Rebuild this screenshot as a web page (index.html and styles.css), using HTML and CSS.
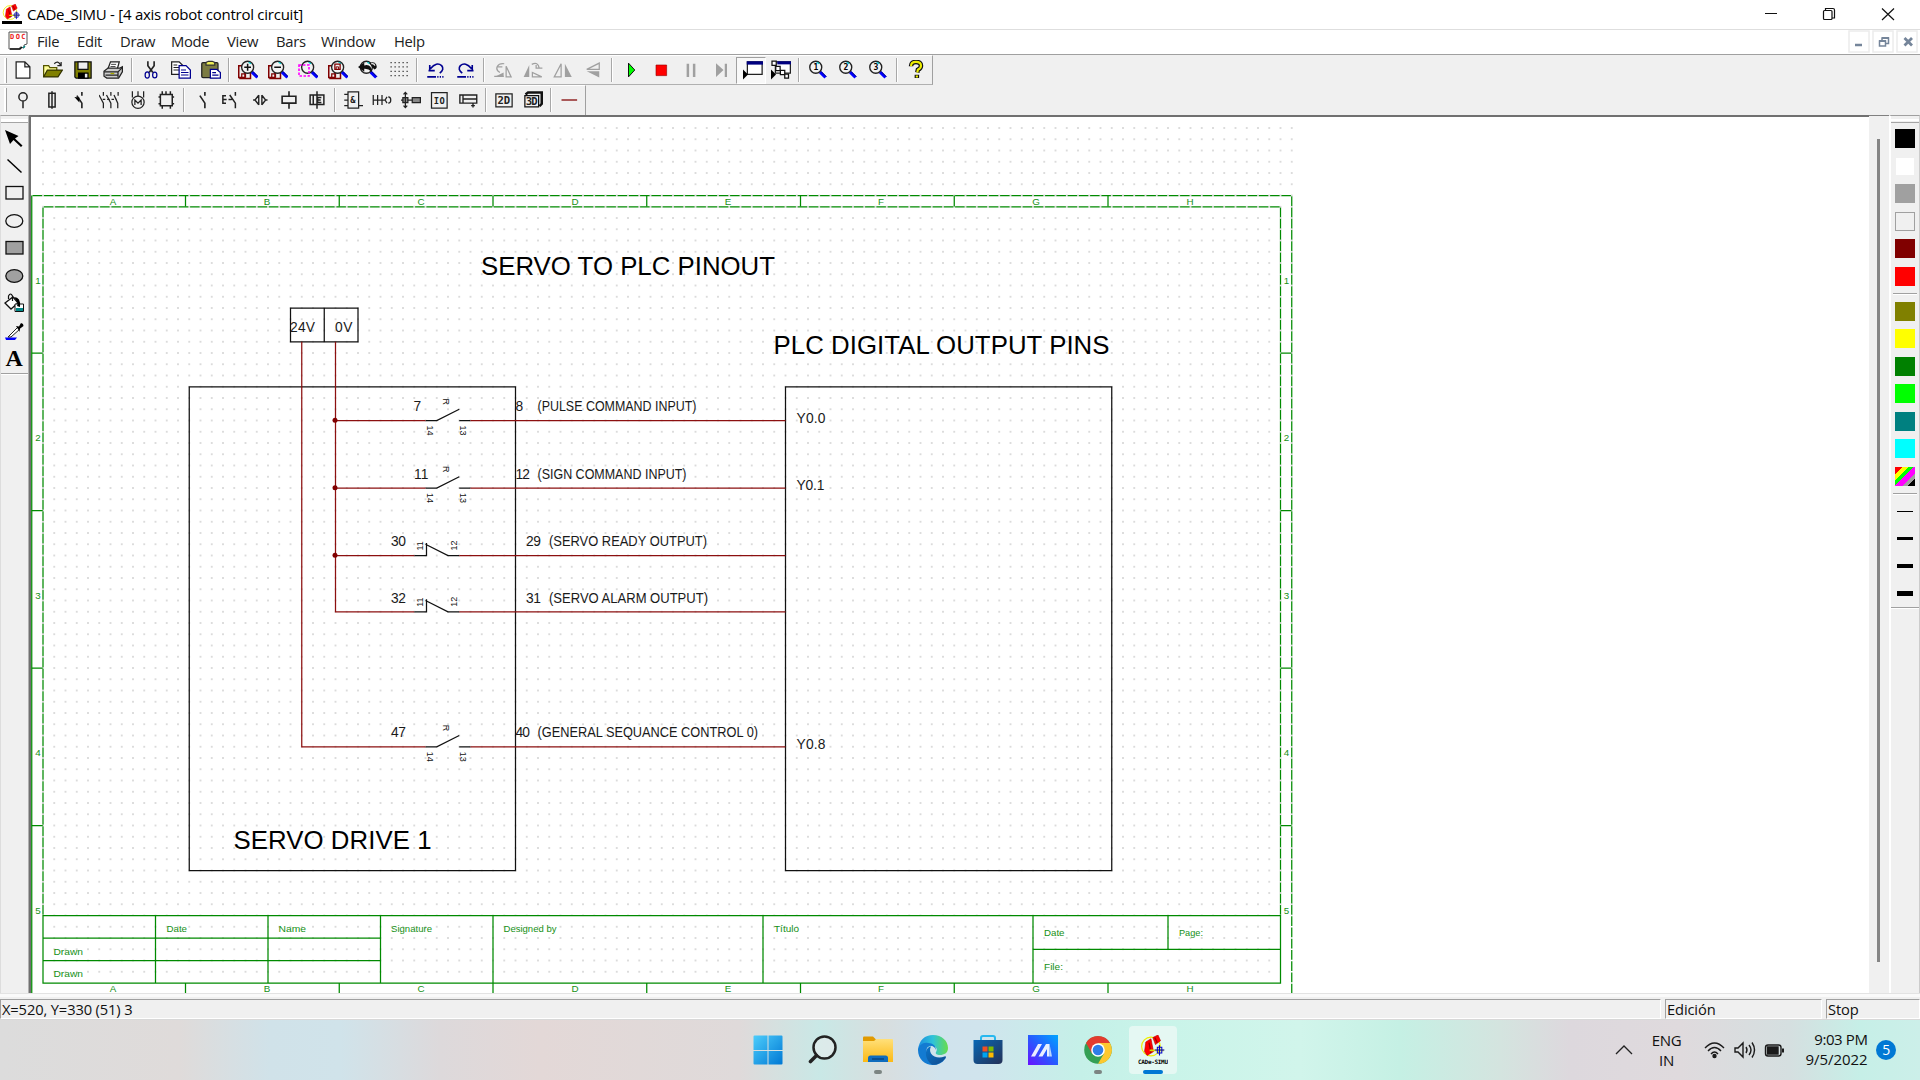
FILE: index.html
```html
<!DOCTYPE html>
<html lang="en">
<head>
<meta charset="utf-8">
<title>CADe_SIMU</title>
<link rel="stylesheet" href="styles.css">
</head>
<body>
<svg class="defs" width="0" height="0">
  <defs>
    <symbol id="lens" viewBox="0 0 16 16"><path d="M9.5 9.5l4.5 4.5" stroke="#00f" stroke-width="2.4"/><path d="M10.5 9.2l4.2 4.2" stroke="#000080" stroke-width=".8"/><circle cx="6.2" cy="5.8" r="4.8" fill="#f2f2f2" stroke="#222" stroke-width="1.1"/><path d="M7 1.8l2 1.2" stroke="#0cc"/></symbol>
    <symbol id="disk" viewBox="0 0 16 16"><path d="M.6 4.5h5v9.5h-5zM5 10h5v4.8H1" fill="#eee" stroke="#800000" stroke-width="1.2"/><path d="M3 14v-3h3v3" fill="none" stroke="#800000"/></symbol>
    <symbol id="robot" viewBox="0 0 20 18"><circle cx="8" cy="9" r="7.3" fill="none" stroke="#ee0" stroke-width=".9"/><path d="M9.500 2l4-2 2 4.500-4 3zM4 5.500l4-2.500 2 10-5 3-2-3z" fill="red" stroke="#b00" stroke-width=".5"/><path d="M6.500 6l1.500 8M11 2l2 4" stroke="#900" fill="none"/><path d="M7 12h11M14.500 8v7" stroke="#dd0" stroke-width="1.300"/><path d="M13 9.500h3.500V14H13zM11 11.700h7.500M14.700 8v8" stroke="#00c" fill="none" stroke-width=".8"/></symbol>
    <symbol id="no-contact" viewBox="0 0 16 16"><path d="M5.500 4.500l4 6v4M9.500 1.500v3" fill="none" stroke="#222" stroke-width="1.300"/></symbol>
    <symbol id="flip" viewBox="0 0 16 16"><path d="M6.500 3v10.500H1z" fill="none" stroke="#a0a0a0"/><path d="M9.500 3v10.500H15z" fill="#a0a0a0"/></symbol>
  </defs>
</svg>
<div class="desktop">
  <header class="titlebar">
    <svg class="app-icon" viewBox="0 0 20 20"><use href="#robot" width="20" height="17"/><path d="M0 17h20v3H0z"/></svg>
    <span class="app-title">CADe_SIMU - [4 axis robot control circuit]</span>
    <svg class="win-controls" viewBox="0 0 180 29" fill="none" stroke="#111" stroke-width="1.2"><path d="M25 13.500h12M142 8.500l12 11.500M154 8.500l-12 11.500"/><rect x="83.500" y="10.500" width="8.500" height="9" rx="1"/><path d="M85.500 10V8.500h7.500q1.500 0 1.500 1.500v8H92"/></svg>
  </header>
  <nav class="menubar">
    <svg class="doc-icon" viewBox="0 0 20 20"><path d="M1 1h18v12l-3 1v3l-4-1v2H1z" fill="#fff" stroke="#555"/><path d="M2 18h10l2-2" stroke="#111" stroke-width="1.500" fill="none"/><path d="M15 17l2-2" stroke="#088" stroke-width="1.500"/><text x="2" y="7.500" font-family="DejaVu Sans Mono" font-weight="bold" font-size="7" textLength="15.500" fill="#e22">DOC</text></svg>
    <span class="m-file">File</span><span class="m-edit">Edit</span><span class="m-draw">Draw</span><span class="m-mode">Mode</span><span class="m-view">View</span><span class="m-bars">Bars</span><span class="m-window">Window</span><span class="m-help">Help</span>
    <svg class="mdi-controls" viewBox="0 0 72 25"><g fill="#fff" stroke="#ececec" stroke-width="1.500"><rect x="1" y="1" width="20" height="21"/><rect x="25" y="1" width="20" height="21"/><rect x="49" y="1" width="20" height="21"/></g><g stroke="#75859a" fill="none"><path d="M7 15h7" stroke-width="2.500"/><path d="M31.500 11h6v5h-6zM34 10V8h6.500v5.500H38" stroke-width="1.500"/><path d="M31 11h7M34 8h7" stroke-width="2.200"/><path d="M56.500 8l7.500 7.500M64 8l-7.500 7.500" stroke-width="2.800"/></g></svg>
  </nav>

  <div class="toolbar toolbar-main">
    <svg class="btn" viewBox="0 0 16 16"><path d="M2.500 1.500h7l4 4v9h-11zM9.500 1.500v4h4" fill="#fff" stroke="#222"/></svg>
    <svg class="btn" viewBox="0 0 16 16"><path d="M.5 13.500v-9h4l1 1.500h5.500v2" fill="#ff9" stroke="#550"/><path d="M.5 13.500l3-5.500h12l-3.500 5.500z" fill="#808000" stroke="#330"/><path d="M9 3q3-3 5 1M14.500 1.500v3h-3" fill="none" stroke="#222"/></svg>
    <svg class="btn" viewBox="0 0 16 16"><path d="M1.500 1.500h13v13h-12l-1-1z" fill="#808000" stroke="#111"/><path d="M4 1.500h8v6H4z" fill="#eee" stroke="#111"/><path d="M4 10h8.500v5H4z"/><path d="M9.500 11h2v3h-2z" fill="#eee"/></svg>
    <svg class="btn" viewBox="0 0 16 16"><path d="M4 7l2-5.500h7L11.500 7" fill="#fff" stroke="#222"/><path d="M6.500 3.500h4M6 5.200h4" stroke="#333" stroke-width=".7"/><path d="M.8 9L4 6.500h9.500l2-1v4l-3 5H3L.8 13z" fill="#ccc" stroke="#222"/><path d="M1 9.500h11l3-3M2 12h10v2M12 9.500V14" fill="none" stroke="#222"/><path d="M6 10.800h3" stroke="#aa0"/></svg>
    <i class="sep"></i>
    <svg class="btn" viewBox="0 0 16 16" fill="none"><path d="M5.500 1v3.500l4 5.500M10.500 1v3.500l-4 5.500" stroke="#222" stroke-width="1.300"/><ellipse cx="5" cy="12" rx="1.700" ry="2.500" stroke="#000090"/><ellipse cx="11" cy="12" rx="1.700" ry="2.300" stroke="#000090"/></svg>
    <svg class="btn" viewBox="0 0 16 16"><path d="M.5 1.500h6l3 3v7h-9z" fill="#fff" stroke="#222"/><path d="M2 4h3M2 6h5M2 8h5" stroke="#222" stroke-width=".8"/><path d="M6.500 4.500h5.500l3.500 3.500v6.500h-9z" fill="#fff" stroke="#000090"/><path d="M8 8h4M8 10h6M8 12h6" stroke="#000090" stroke-width=".9"/></svg>
    <svg class="btn" viewBox="0 0 16 16"><rect x=".6" y="2" width="13" height="12" rx="1" fill="#7b7b42" stroke="#222"/><path d="M4 4V2l2-1h3l2 1v2z" fill="#ee5" stroke="#333"/><path d="M7.500 7.500h5l3 2.500v4.500h-8z" fill="#fff" stroke="#000090"/><path d="M9 10h3M9 12h5" stroke="#000090"/></svg>
    <i class="sep"></i>
    <svg class="btn" viewBox="0 0 16 16"><use href="#disk"/><g transform="translate(1.500 0)"><use href="#lens"/></g><path d="M5 5.800h5.400M7.700 3v5.500" stroke="#111" stroke-width="1.200"/></svg>
    <svg class="btn" viewBox="0 0 16 16"><use href="#disk"/><g transform="translate(1.500 0)"><use href="#lens"/></g><path d="M5 5.800h5.400" stroke="#111" stroke-width="1.200"/></svg>
    <svg class="btn" viewBox="0 0 16 16"><g transform="translate(1.500 0)"><use href="#lens"/></g><path d="M.8 4h8v8.800h-8z" fill="none" stroke="#f0f" stroke-width="1.300" stroke-dasharray="2 1.200"/></svg>
    <svg class="btn" viewBox="0 0 16 16"><use href="#disk"/><g transform="translate(1.500 0)"><use href="#lens"/></g><path d="M5.500 3.200h4.200v4.300H5.500z" fill="none" stroke="#800000"/><path d="M6.500 7.500v-2h2v2" fill="none" stroke="#800000" stroke-width=".8"/></svg>
    <svg class="btn" viewBox="0 0 16 16"><g transform="translate(.5 0)"><use href="#lens"/></g><path d="M0 5.500L5 2v2.300Q11 3 11 9.500 8.500 6.800 5 7v2.300zM9 2.500q4-2 5.500 1t-1.500 4" fill="#111"/><path d="M10.500 3q2.500-.5 3 1.500" fill="none" stroke="#eee"/></svg>
    <svg class="btn" viewBox="0 0 16 16"><path d="M2 2h14M2 5.500h14M2 9h14M2 12.500h14" stroke="#333" stroke-dasharray="1 2.200"/></svg>
    <i class="sep"></i>
    <svg class="btn" viewBox="0 0 16 16"><path d="M3 9V4M2 8.500h5M3.500 7q5-6 9-2.500 2.500 3-1.500 6" fill="none" stroke="#000090" stroke-width="1.300"/><path d="M1 13.500h14" stroke="#000090" stroke-width="1.400" stroke-dasharray="7 1 1 1 1 1 1 1"/></svg>
    <svg class="btn" viewBox="0 0 16 16"><path d="M13 9V4M14 8.500H9M12.500 7q-5-6-9-2.500-2.500 3 1.500 6" fill="none" stroke="#000090" stroke-width="1.300"/><path d="M1 13.500h14" stroke="#000090" stroke-width="1.400" stroke-dasharray="7 1 1 1 1 1 1 1"/></svg>
    <i class="sep"></i>
    <svg class="btn" viewBox="0 0 16 16"><path d="M1 13.500L8.500 10v3.500z" fill="#a0a0a0"/><path d="M10.500 5v8.500h4zM5.500 10Q2 8 3.500 5 5 2.500 9 3M3.500 5.500h4M1 13h7.500" fill="none" stroke="#a0a0a0"/></svg>
    <svg class="btn" viewBox="0 0 16 16"><path d="M5 4v9.500H.500z" fill="#a0a0a0"/><path d="M7.500 10v3.500H15zM7 3.500Q12 1 13 6.500M10.500 6.500h5M10.500 4v3" fill="none" stroke="#a0a0a0"/></svg>
    <svg class="btn" viewBox="0 0 16 16"><use href="#flip"/></svg>
    <svg class="btn" viewBox="0 0 16 16"><path d="M13 2.500v5H3z" fill="none" stroke="#a0a0a0"/><path d="M3 9h10v5z" fill="#a0a0a0"/></svg>
    <i class="sep"></i>
    <svg class="btn" viewBox="0 0 16 16"><path d="M6 2.500L11 8l-5 5.500z" fill="#0f0" stroke="#111" stroke-width=".8"/></svg>
    <svg class="btn" viewBox="0 0 16 16"><path d="M4 4h8.500v8.500H4z" fill="red" stroke="#900" stroke-width=".5"/></svg>
    <svg class="btn" viewBox="0 0 16 16"><path d="M5.500 3v10.500M10.500 3v10.500" stroke="#a0a0a0" stroke-width="2"/></svg>
    <svg class="btn" viewBox="0 0 16 16"><path d="M4 2.500L10 8l-6 5.500zM11 3h1.800v10.500H11z" fill="#a0a0a0"/></svg>
    <span class="btn-pressed"><svg class="btn" viewBox="0 0 16 16"><path d="M3.500 1.500h11.800v10H3.500z" fill="#fff" stroke="#222"/><path d="M3 1h13v2.700H3z" fill="#000080"/><path d="M0 7.500L4 11.500 0 15.500z"/></svg></span>
    <svg class="btn" viewBox="0 0 16 16"><path d="M3.500 1.500h12v9h-12z" fill="#fff" stroke="#222"/><path d="M5 1h11v2.500H5z" fill="#000080"/><path d="M.8.800h3.400v3.400H.8zM3.800 5h3.500v3.500H3.800zM7.500 8.200H11v3.500H7.500zM11 11.200h3v3.200h-3z" fill="#fff" stroke="#111"/><path d="M0 7.500L4 11.500 0 15.500z"/></svg>
    <i class="sep"></i>
    <svg class="btn" viewBox="0 0 16 16"><use href="#lens"/><text class="lens-no" x="4.300" y="8.200">1</text></svg>
    <svg class="btn" viewBox="0 0 16 16"><use href="#lens"/><text class="lens-no" x="4.300" y="8.200">2</text></svg>
    <svg class="btn" viewBox="0 0 16 16"><use href="#lens"/><text class="lens-no" x="4.300" y="8.200">3</text></svg>
    <i class="sep"></i>
    <svg class="btn" viewBox="0 0 16 16"><path d="M4 5q0-3.500 4-3.500t4 3q0 2-2.500 3.300L9 10M8.700 11.800v2.500" fill="none" stroke="#111" stroke-width="3.600"/><path d="M4 5q0-3.500 4-3.500t4 3q0 2-2.500 3.300L9 10M8.700 12.300v1.600" fill="none" stroke="#ee0" stroke-width="1.700"/></svg>
  </div>

  <div class="toolbar toolbar-parts">
    <svg class="btn" viewBox="0 0 16 16" fill="none" stroke="#222" stroke-width="1.200"><circle cx="8" cy="5.500" r="3.300"/><path d="M8 9v5.500"/></svg>
    <svg class="btn" viewBox="0 0 16 16" fill="none" stroke="#222" stroke-width="1.200"><path d="M5.500 2.500h5v11h-5zM8 1v14"/></svg>
    <svg class="btn" viewBox="0 0 16 16"><use href="#no-contact"/><path d="M3.500 5.500l4 .5v4z"/></svg>
    <svg class="btn" viewBox="0 0 16 16" fill="none" stroke="#222"><path d="M0 4l3.500 6.500v4M3.500 1.500v3M6 4l3.500 6.500v4M9.500 1.500v3M12 4l3 6.500v4M15.300 1.500v3"/><path d="M3 7.500h11" stroke-dasharray="2 1.500"/></svg>
    <svg class="btn" viewBox="0 0 16 16" fill="none" stroke="#222"><circle cx="8" cy="9.800" r="4.900"/><path d="M3.500 1v5M8 1v4M12.500 1v5M5.500 12V8L8 10.500 10.500 8v4"/></svg>
    <svg class="btn" viewBox="0 0 16 16" fill="none" stroke="#222"><path d="M3.500 3.500h9.500v9H3.500zM5 1v2.500M8 1v2.500M11.500 1v2.500M5 12.500V15M11.500 12.500V15M2 5.500h1.500M13 5.500h1.500M2 11h1.500M13 11h1.500" stroke-width="1.200"/></svg>
    <i class="sep"></i>
    <svg class="btn" viewBox="0 0 16 16"><use href="#no-contact"/></svg>
    <svg class="btn" viewBox="0 0 16 16"><path d="M7 4l4.500 6.500v4M11.500 1.500v3M4 4.500H1.500v6H4M1.500 7.500h3M6 7.500h2.500" fill="none" stroke="#222" stroke-width="1.200"/></svg>
    <svg class="btn" viewBox="0 0 16 16" fill="none" stroke="#222" stroke-width="1.100"><path d="M7 4.200L4 8l3 3.800M9.500 4.200L12.500 8l-3 3.800M7 4v8M9.500 4v8M2.500 8h2M12 8h2"/></svg>
    <svg class="btn" viewBox="0 0 16 16" fill="none" stroke="#222" stroke-width="1.300"><path d="M2.500 5h11v5.500h-11zM8 1v4M8 10.500V15"/></svg>
    <svg class="btn" viewBox="0 0 16 16" fill="none" stroke="#222" stroke-width="1.200"><path d="M2.500 4h11v7.500h-11zM8 1v14M5 4v7.500M11.500 6H8.500v4h3M8 8h3"/></svg>
    <i class="sep"></i>
    <svg class="btn" viewBox="0 0 16 16" fill="none" stroke="#222"><path d="M4 1.500h8.500v13H4zM1 3.500h3M1 8h3M1 12.500h3M12.500 12.500H16"/><text class="mono" x="5.800" y="10">&amp;</text></svg>
    <svg class="btn" viewBox="0 0 16 16" fill="none" stroke="#222"><path d="M1 4v8M1 8h3.500M4.500 4v8M8 4v8M5 8h5.500M12 5.500L10.500 8l1.500 2.500M13 5.500q2 0 2 2.500t-2 2.500"/></svg>
    <svg class="btn" viewBox="0 0 16 16" stroke="#222"><path d="M1.500 6h4v4h-4zM9 6h6.500v4H9z" fill="#888"/><path d="M5.500 8H9M3.500 2v12M2 3.500L3.500 2 5 3.500M2 12.500L3.500 14 5 12.500M0 8h1.500" fill="none"/></svg>
    <svg class="btn" viewBox="0 0 16 16" fill="none" stroke="#222"><path d="M2 2h12.500v12.500H2z"/><text class="mono" x="3.700" y="10.800" textLength="9">IO</text></svg>
    <svg class="btn" viewBox="0 0 16 16" fill="none" stroke="#222" stroke-width="1.100"><path d="M1.500 4h13.500v6.500H1.500zM4 4v6.500M4 7.200h11M12 10.500v3.500M10.500 12.500h3"/></svg>
    <i class="sep"></i>
    <svg class="btn" viewBox="0 0 16 16" fill="none" stroke="#222"><path d="M1.500 3h13v10.500h-13z"/><text class="mono big" x="2.700" y="11.300">2D</text></svg>
    <svg class="btn" viewBox="0 0 16 16" fill="none" stroke="#111"><path d="M1.500 4.500h11v9h-11z"/><path d="M2 3.500L4 2h11v9l-1.800 2" stroke-width="2"/><text class="mono big" x="2.200" y="11.800" textLength="9.500">3D</text></svg>
    <i class="sep"></i>
    <svg class="btn" viewBox="0 0 16 16"><path d="M2 8h12.500" stroke="#800000"/></svg>
  </div>

  <main class="workspace">
    <aside class="draw-palette">
      <svg class="tool" viewBox="0 0 20 20"><path d="M1 2l13.500 6-3.500 2.500 7.500 7-1.500 1.500-7.500-7L6 16z"/></svg>
      <svg class="tool" viewBox="0 0 20 20"><path d="M3.500 3.500l14 13" stroke="#000" stroke-width="1.500"/></svg>
      <svg class="tool" viewBox="0 0 20 20"><rect x="2" y="3.500" width="17" height="12.500" fill="none" stroke="#111" stroke-width="1.300"/></svg>
      <svg class="tool" viewBox="0 0 20 20"><ellipse cx="10.300" cy="10" rx="8.500" ry="6.300" fill="none" stroke="#111" stroke-width="1.300"/></svg>
      <svg class="tool" viewBox="0 0 20 20"><rect x="2" y="3.500" width="17" height="12.500" fill="#a0a0a0" stroke="#111" stroke-width="1.300"/></svg>
      <svg class="tool" viewBox="0 0 20 20"><ellipse cx="10.300" cy="10" rx="8.500" ry="6.300" fill="#a0a0a0" stroke="#111" stroke-width="1.300"/></svg>
      <svg class="tool" viewBox="0 0 20 20"><path d="M1 10l8-6 5 6-7 6z" fill="#fff" stroke="#111" stroke-width="1.300"/><path d="M11 11h8.500v7.500H11z" fill="#fff" stroke="#111"/><path d="M12 15h7v3h-7z" fill="#088"/><path d="M4.500 6V3q2-4 4 0v5" fill="none" stroke="#111" stroke-width="1.200"/><path d="M10 4q7 0 6 10l-3-1 1-3z"/></svg>
      <svg class="tool" viewBox="0 0 20 20"><path d="M1 16.500h12l-2 2.500H2z" fill="#00f"/><path d="M5 15l9-9 2 2-9 8H4z" fill="#fff" stroke="#222"/><path d="M12 5l3 .5L17 2l2 1 .5 2-4 3 .5 3-2.500-3.500z"/></svg>
      <svg class="tool" viewBox="0 0 20 20"><text x="10.200" y="18" text-anchor="middle" font-family="Liberation Serif" font-weight="bold" font-size="24">A</text></svg>
      <hr>
    </aside>

    <svg class="canvas" viewBox="31 117 1838 876">
      <defs>
        <pattern id="grid" x="37.375" y="122.375" width="11.250" height="11.250" patternUnits="userSpaceOnUse"><rect x="5" y="5" width="1.250" height="1.250" fill="#aeaeae"/></pattern>
        <g id="open-contact"><path class="contact" d="M0 0h11.250l22.500-11.250M33.750 0H45"/><text transform="translate(1 5) rotate(90)" class="pin">14</text><text transform="translate(34.500 5) rotate(90)" class="pin">13</text><text transform="translate(17 -22) rotate(90)" class="pin">R</text></g>
        <g id="closed-contact"><path class="contact" d="M-11.250 0H1v-12.500M0-11.250L22.500 0h11.250"/><text transform="translate(-3 -5) rotate(-90)" class="pin">11</text><text transform="translate(31 -5) rotate(-90)" class="pin">12</text></g>
      </defs>
      <g class="frame">
        <path class="broken" d="M31.750 195.500H1291.750V993M43 206.750H1280.500V915.500M43 206.750V915.500"/>
      </g>
      <rect x="37.400" y="122.400" width="1260" height="793" fill="url(#grid)"/>
      <rect x="48.600" y="920" width="1226" height="58" fill="url(#grid)"/>
      <g class="frame">
        <path d="M31.750 195.500V993M43 915.500H1280.500V983H43zM43 938H380.500M43 960.500H380.500M155.500 915.500V983M268 915.500V983M380.500 915.500V983M493 915.500V993M763 915.500V983M1033 915.500V983M1168 915.500V949.250M1033 949.250H1280.500"/>
        <path d="M185.500 195.500v11M339.250 195.500v11M493 195.500v11M646.750 195.500v11M800.500 195.500v11M954.250 195.500v11M1108 195.500v11M185.500 983v10M339.250 983v10M646.750 983v10M800.500 983v10M954.250 983v10M1108 983v10"/>
        <path d="M31.750 353h11M31.750 510.500h11M31.750 668h11M31.750 825.500h11M1280.500 353h11M1280.500 510.500h11M1280.500 668h11M1280.500 825.500h11"/>
      </g>
      <g class="frame-text" text-anchor="middle">
        <text x="113" y="204.500">A</text><text x="267" y="204.500">B</text><text x="421" y="204.500">C</text><text x="575" y="204.500">D</text><text x="728" y="204.500">E</text><text x="881" y="204.500">F</text><text x="1036" y="204.500">G</text><text x="1190" y="204.500">H</text>
        <text x="113" y="992">A</text><text x="267" y="992">B</text><text x="421" y="992">C</text><text x="575" y="992">D</text><text x="728" y="992">E</text><text x="881" y="992">F</text><text x="1036" y="992">G</text><text x="1190" y="992">H</text>
        <text x="38" y="283.500">1</text><text x="38" y="441">2</text><text x="38" y="598.500">3</text><text x="38" y="756">4</text><text x="38" y="913.500">5</text>
        <text x="1286.500" y="283.500">1</text><text x="1286.500" y="441">2</text><text x="1286.500" y="598.500">3</text><text x="1286.500" y="756">4</text><text x="1286.500" y="913.500">5</text>
      </g>
      <g class="frame-text">
        <text x="53.500" y="954.500" textLength="29.500" lengthAdjust="spacingAndGlyphs">Drawn</text><text x="53.500" y="977" textLength="29.500" lengthAdjust="spacingAndGlyphs">Drawn</text>
        <text x="166.500" y="932" textLength="20.500" lengthAdjust="spacingAndGlyphs">Date</text><text x="278.500" y="932" textLength="27.500" lengthAdjust="spacingAndGlyphs">Name</text><text x="391" y="932" textLength="41" lengthAdjust="spacingAndGlyphs">Signature</text><text x="503.500" y="932" textLength="53" lengthAdjust="spacingAndGlyphs">Designed by</text><text x="774" y="932" textLength="25" lengthAdjust="spacingAndGlyphs">Título</text>
        <text x="1044" y="936" textLength="20.500" lengthAdjust="spacingAndGlyphs">Date</text><text x="1179" y="936" textLength="24" lengthAdjust="spacingAndGlyphs">Page:</text><text x="1044" y="969.500" textLength="19" lengthAdjust="spacingAndGlyphs">File:</text>
      </g>
      <g class="ink">
        <path d="M189.250 386.750H515.500V870.500H189.250zM785.500 386.750H1111.750V870.500H785.500zM290.500 308H358V341.750H290.500zM324.250 308V341.750"/>
        <use href="#open-contact" x="425.500" y="420.500"/><use href="#open-contact" x="425.500" y="488"/><use href="#closed-contact" x="425.500" y="555.500"/><use href="#closed-contact" x="425.500" y="611.750"/><use href="#open-contact" x="425.500" y="746.750"/>
      </g>
      <g class="wire">
        <path d="M301.750 341.750V746.750H425.500M335.500 341.750V611.750H414.250M335.500 420.500H425.500M335.500 488H425.500M335.500 555.500H414.250M470.500 420.500H785.500M470.500 488H785.500M459.250 555.500H785.500M459.250 611.750H785.500M470.500 746.750H785.500"/>
        <circle cx="335" cy="420.300" r="2.500"/><circle cx="335" cy="487.800" r="2.500"/><circle cx="335" cy="555.300" r="2.500"/>
      </g>
      <g class="heading"><text x="481" y="274.500" textLength="294">SERVO TO PLC PINOUT</text><text x="773.500" y="353.500" textLength="336">PLC DIGITAL OUTPUT PINS</text><text x="233.500" y="848.600" textLength="198">SERVO DRIVE 1</text></g>
      <g class="label">
        <text x="290" y="332.400" textLength="25">24V</text><text x="335" y="332.400" textLength="17.500">0V</text>
        <text x="413.500" y="411.400">7</text><text x="414" y="478.500" textLength="14.500">11</text><text x="391" y="546.400" textLength="15">30</text><text x="391" y="602.600" textLength="15">32</text><text x="391" y="737.400" textLength="15">47</text>
        <text x="515.500" y="411.400">8</text><text x="537.500" y="411.400" textLength="159" lengthAdjust="spacingAndGlyphs">(PULSE COMMAND INPUT)</text>
        <text x="515.500" y="478.500" textLength="14.500">12</text><text x="537.500" y="478.500" textLength="149" lengthAdjust="spacingAndGlyphs">(SIGN COMMAND INPUT)</text>
        <text x="526" y="546.400" textLength="15">29</text><text x="549" y="546.400" textLength="158" lengthAdjust="spacingAndGlyphs">(SERVO READY OUTPUT)</text>
        <text x="526" y="602.600" textLength="15">31</text><text x="549" y="602.600" textLength="159" lengthAdjust="spacingAndGlyphs">(SERVO ALARM OUTPUT)</text>
        <text x="515.500" y="737.400" textLength="14.500">40</text><text x="537.500" y="737.400" textLength="220.500" lengthAdjust="spacingAndGlyphs">(GENERAL SEQUANCE CONTROL 0)</text>
        <text x="796.500" y="422.800" textLength="29">Y0.0</text><text x="796.500" y="490.300" textLength="28">Y0.1</text><text x="796.500" y="749" textLength="29">Y0.8</text>
      </g>
    </svg>

    <div class="scrollbar"><div class="scroll-thumb"></div></div>

    <aside class="color-palette">
      <span class="swatch"><i class="black"></i></span><span class="swatch"><i class="white"></i></span><span class="swatch"><i class="gray"></i></span><span class="swatch"><i class="none"></i></span><span class="swatch"><i class="maroon"></i></span><span class="swatch"><i class="red"></i></span>
      <hr>
      <span class="swatch"><i class="olive"></i></span><span class="swatch"><i class="yellow"></i></span><span class="swatch"><i class="green"></i></span><span class="swatch"><i class="lime"></i></span><span class="swatch"><i class="teal"></i></span><span class="swatch"><i class="cyan"></i></span><span class="swatch"><i class="rainbow"></i></span>
      <hr>
      <span class="swatch"><b class="w1"></b></span><span class="swatch"><b class="w2"></b></span><span class="swatch"><b class="w3"></b></span><span class="swatch"><b class="w4"></b></span>
      <hr class="end">
    </aside>
  </main>

  <footer class="statusbar"><span class="pane pane-main">X=520, Y=330 (51) 3</span><span class="pane pane-mode">Edición</span><span class="pane pane-run">Stop</span></footer>

  <div class="taskbar">
    <div class="apps">
      <span class="app"><svg viewBox="0 0 30 30"><defs><linearGradient id="win" x2="1" y2="1"><stop stop-color="#4ccdfb"/><stop offset="1" stop-color="#0078d4"/></linearGradient></defs><path d="M.5 1.500q0-1 1-1h13V15H.5zM15.500.500h13q1 0 1 1V15h-14zM.5 16h14v13.500h-13q-1 0-1-1zM15.500 16h14v12.500q0 1-1 1h-13z" fill="url(#win)"/></svg></span>
      <span class="app"><svg viewBox="0 0 30 30" fill="none" stroke="#222"><circle cx="16.500" cy="12.500" r="11" fill="#e8eded" fill-opacity=".6" stroke-width="2.500"/><path d="M8.500 20.500l-6 6" stroke-width="3.600" stroke-linecap="round"/></svg></span>
      <span class="app running"><svg viewBox="0 0 30 30"><defs><linearGradient id="folder" x2="0" y2="1"><stop stop-color="#ffe07a"/><stop offset="1" stop-color="#fcb914"/></linearGradient></defs><path d="M0 2.500q0-1 1-1h9l3 3v3H0z" fill="#e19a00"/><path d="M0 6h11l2.500-2H29q1 0 1 1v22H0z" fill="url(#folder)"/><path d="M5 27v-4q0-2.500 2.500-2.500h15Q25 20.500 25 23v4z" fill="#0f6cbd"/><path d="M9 24h12" stroke="#073f78" stroke-width="1.300"/></svg></span>
      <span class="app"><svg viewBox="0 0 30 30"><defs><linearGradient id="edge1"><stop stop-color="#1b8de0"/><stop offset=".5" stop-color="#2fc3d9"/><stop offset="1" stop-color="#67dd4a"/></linearGradient><linearGradient id="edge2" y2="1"><stop stop-color="#0b75ca"/><stop offset="1" stop-color="#114a8b"/></linearGradient></defs><path d="M0 15C1 5 7 0 15 0c9 0 15 6 15 13 0 5-4 7-8 7-3 0-5-1-4-3 2-3 0-6-4-6-5 0-9 5-9 5z" fill="url(#edge1)"/><path d="M0 15c1-5 5-8 10-7 5 0 8 3 8 7-1-3-4-5-7-4-4 2-3 9 2 12 5 2 11 1 14-1 1 0 1 1 0 2-3 4-7 6-12 6C7 30 0 24 0 15z" fill="#137bd2"/><path d="M11 12c-5 3-4 13 3 17.800C21 30 26 26 28 22c0-1-1-1-1.500-.500-5 2-11 1-13.500-3-1.500-3-1-5 0-7z" fill="url(#edge2)"/></svg></span>
      <span class="app"><svg viewBox="0 0 30 30"><defs><linearGradient id="store" x2="1" y2="1"><stop stop-color="#0868b5"/><stop offset="1" stop-color="#243056"/></linearGradient></defs><path d="M8 6V3q0-2 2-2h10q2 0 2 2v3" fill="none" stroke="#26b8ef" stroke-width="2"/><path d="M.5 5h29v20q0 4-4 4h-21q-4 0-4-4z" fill="url(#store)"/><path d="M9.500 11.500h5v5h-5z" fill="#f25022"/><path d="M15.500 11.500h5v5h-5z" fill="#7fba00"/><path d="M9.500 17.500h5v5h-5z" fill="#00a4ef"/><path d="M15.500 17.500h5v5h-5z" fill="#ffb900"/></svg></span>
      <span class="app"><svg viewBox="0 0 30 30"><defs><linearGradient id="asus" x1="0" y1="1" x2="1" y2="0"><stop stop-color="#6a10ff"/><stop offset=".5" stop-color="#265cff"/><stop offset="1" stop-color="#00a5ff"/></linearGradient></defs><path d="M0 0h30v30H0z" fill="url(#asus)"/><path d="M3 21.500L10 9h4L7 21.500zM10.500 21.500L18 9h3.500v12.500H19V14l-4.500 7.500z" fill="#fff" fill-opacity=".9"/><path d="M21.500 9l2.500 12.500h-2.500z" fill="#b9d7ff"/></svg></span>
      <span class="app running"><svg viewBox="0 0 30 30"><circle cx="15" cy="15" r="13.800" fill="#34a055"/><path d="M3 8.100A13.800 13.800 0 0 1 27 8.100H15l-6 10.400z" fill="#e33b2e"/><path d="M27 8.100A13.800 13.800 0 0 1 15 28.800l6-10.300L15 8.100z" fill="#fdc82f"/><circle cx="15" cy="15" r="6.800" fill="#fff"/><circle cx="15" cy="15" r="5.300" fill="#2f7de8"/></svg></span>
      <span class="app active"><svg viewBox="0 0 30 30"><use href="#robot" x="2" y="0" width="27" height="23"/><text x="0" y="29" font-family="DejaVu Sans Mono" font-weight="bold" font-size="6" textLength="30">CADe-SIMU</text></svg></span>
    </div>
    <div class="tray">
      <svg class="chevron" viewBox="0 0 18 10"><path d="M1 9l8-8 8 8" fill="none" stroke="#222" stroke-width="1.300"/></svg>
      <div class="lang"><span>ENG</span><span>IN</span></div>
      <svg class="tray-icons" viewBox="0 0 82 20" fill="none" stroke="#1b1b1b" stroke-width="1.400"><path d="M1 8q9.500-10 19 0M4 11q6.500-7 13 0M7 14q3.500-4 7 0"/><circle cx="10.500" cy="16" r="1.500" fill="#1b1b1b"/><path d="M31 8h3l5-5v14l-5-5h-3zM42 7q2 3 0 6M45 5q4 5 0 10M48 2.500q5 7.500 0 15"/><rect x="61.500" y="5" width="15.500" height="11" rx="2.500"/><path d="M63.500 7H74v7H63.500z" fill="#1b1b1b"/><path d="M79 8.500v4" stroke-width="2"/></svg>
      <div class="clock"><span class="time">9:03 PM</span><span class="date">9/5/2022</span></div>
      <span class="notice">5</span>
    </div>
  </div>
</div>
</body>
</html>
```
FILE: styles.css
```css
* { box-sizing: border-box; }
body { margin: 0; width: 1920px; height: 1080px; overflow: hidden; background: #f0f0f0; font-family: "Open Sans", "Noto Sans", sans-serif; color: #111; }
.defs { display: block; height: 0; }
.desktop { display: flex; flex-direction: column; width: 1920px; height: 1080px; }

.titlebar { display: flex; align-items: center; height: 29px; padding-left: 2px; background: #fff; }
.app-icon { width: 20px; height: 20px; margin-top: -1px; }
.app-title { margin: -2px 0 0 5px; font-size: 15px; letter-spacing: -0.250px; white-space: nowrap; color: #000; }
.win-controls { width: 180px; height: 29px; margin-left: auto; }

.menubar { display: flex; align-items: center; height: 26px; border-top: 1px solid #dedede; border-bottom: 1px solid #a0a0a0; background: #fff; font-size: 14.800px; line-height: 20px; white-space: nowrap; padding-left: 8px; color: #222; }
.menubar span { letter-spacing: -0.300px; margin-top: -3px; }
.doc-icon { width: 20px; height: 20px; margin: -3px 9px 0 0; }
.m-file { width: 40px; }
.m-edit { width: 43px; }
.m-draw { width: 51px; }
.m-mode { width: 56px; }
.m-view { width: 49px; }
.m-bars { width: 45px; }
.m-window { width: 73px; }
.mdi-controls { width: 72px; height: 25px; margin-left: auto; }

.toolbar { display: flex; align-items: center; height: 30px; border-top: 1px solid #fff; border-right: 1px solid #a0a0a0; border-bottom: 1px solid #b0b0b0; background: #f0f0f0; }
.toolbar::before { content: ""; align-self: stretch; width: 2px; margin: 2px 3px 1px 4px; background: #fff; border-right: 1px solid #a0a0a0; }
.toolbar-main { width: 933px; }
.toolbar-parts { width: 586px; border-bottom: 0; padding-bottom: 2px; }
.btn { flex: none; width: 20px; height: 20px; margin: 0 5px; }
.toolbar-parts .btn { margin: 0 4.350px; }
.toolbar-main > .btn:first-of-type, .toolbar-parts > .btn:first-of-type { margin-left: 3px; }
.sep { flex: none; width: 2px; height: 24px; margin: 0 2.750px; border-left: 1px solid #a8a8a8; border-right: 1px solid #fff; }
.toolbar-parts .sep { margin: 0 2.700px; }
.btn-pressed { flex: none; display: flex; align-items: center; width: 30px; height: 27px; padding-left: 1px; background: #f8f8f8; border: 1px solid #fff; border-top-color: #a0a0a0; border-left-color: #a0a0a0; }
.lens-no { font: bold 6.500px "DejaVu Sans Mono", monospace; }
.mono { font: bold 7px "DejaVu Sans Mono", monospace; fill: #222; stroke: none; }
.big { font-size: 8.500px; }

.workspace { display: flex; height: 879px; border-bottom: 1px solid #e3e3e3; }
.draw-palette { width: 29px; padding-top: 12px; border-top: 1px solid #a0a0a0; border-right: 1px solid #b0b0b0; border-left: 1px solid #ddd; display: flex; flex-direction: column; background: linear-gradient(#fff, #fff) 0 3px / 27px 3px no-repeat, linear-gradient(#a5a5a5, #a5a5a5) 0 6px / 28px 1px no-repeat, #f0f0f0; }
.tool { width: 20px; height: 20px; margin: 0 0 7.500px 2.500px; flex: none; overflow: visible; }
.draw-palette hr, .color-palette hr { margin: 0; border: 0; border-top: 1px solid #a0a0a0; border-bottom: 1px solid #fff; }
.draw-palette hr { margin-top: -3px; }
.canvas { flex: none; width: 1840px; height: 878px; background: #fff; border-left: 2px solid #707070; border-top: 2px solid #707070; }
.scrollbar { width: 20px; padding: 23px 0 31px 8px; border-top: 1px solid #808080; }
.scroll-thumb { width: 3px; height: 100%; background: #858585; }
.color-palette { width: 31px; border-left: 2px solid #fff; border-top: 1px solid #a0a0a0; border-right: 1px solid #ccc; padding: 9px 0 0; display: flex; flex-direction: column; background: linear-gradient(#a5a5a5, #a5a5a5) 0 6px / 29px 1px no-repeat, linear-gradient(#fff, #fff) 0 3px / 29px 2px no-repeat, #f0f0f0; }
.swatch { flex: none; display: flex; align-items: center; justify-content: center; height: 27.500px; }
.swatch i { width: 20px; height: 19px; }
.swatch b { width: 16px; background: #000; }
.color-palette hr { margin: 3px 2px 2.400px; }
.color-palette hr.end { margin: 0; }
.black { background: #000; }
.swatch .white { width: 18px; height: 17px; background: #fff; }
.gray { background: #a0a0a0; }
.none { border: 1px solid #a0a0a0; }
.maroon { background: #800000; }
.red { background: #f00; }
.olive { background: #808000; }
.yellow { background: #ff0; }
.green { background: #008000; }
.lime { background: #0f0; }
.teal { background: #008080; }
.cyan { background: #0ff; }
.rainbow { background: linear-gradient(135deg, #f00 0 18%, #ff0 18% 34%, #0f0 34% 48%, #f0f 48% 67%, #a0a0a0 67% 82%, #000 82%); }
.w1 { height: 1px; }
.w2 { height: 3px; }
.w3 { height: 4px; }
.w4 { height: 5px; }

.canvas text { font-family: "Liberation Sans", Arial, sans-serif; }
.frame path { fill: none; stroke: #008a00; stroke-width: 1.250; }
.frame .broken { stroke-dasharray: 9.650 1.600; stroke-dashoffset: -.8; }
.frame-text { font-size: 9.800px; fill: #159015; }
.ink path, .contact { fill: none; stroke: #111; stroke-width: 1.250; }
.canvas .pin { font-size: 9px; fill: #111; }
.wire path { fill: none; stroke: #8c1010; stroke-width: 1.250; }
.wire circle { fill: #800000; }
.heading { font-size: 25.800px; fill: #000; }
.label { font-size: 13.800px; fill: #1a1a1a; }

.statusbar { display: flex; gap: 4px; height: 26px; padding-top: 5px; background: linear-gradient(#fafafa 0 3px, #f0f0f0 3px); border-bottom: 1px solid #d8d8d8; font-size: 14.700px; line-height: 19px; letter-spacing: -0.130px; white-space: nowrap; }
.pane { height: 20px; padding-left: 1px; border-top: 1px solid #a0a0a0; border-left: 1px solid #a0a0a0; border-right: 1px solid #fff; border-bottom: 1px solid #fff; }
.pane-main { width: 1661px; }
.pane-mode { width: 157px; }
.pane-run { flex: 1; }

.taskbar { display: flex; height: 60px; background: linear-gradient(90deg, #dcdcdc 0, #dfdbda 180px, #d0e2e9 270px, #d0e3ea 340px, #ddd9db 440px, #e3d8d7 540px, #dfdada 740px, #c9e8e6 820px, #d8dedf 885px, #d0e3ed 940px, #d0e4ed 980px, #c5f0e8 1080px, #c9f4e9 1160px, #d1f5eb 1300px, #c5f0e4 1400px, #d4e4df 1500px, #ddd8dd 1570px, #dfdadd 1680px, #d5dfe0 1790px, #c6efe7 1860px, #ccefe9); }
.apps { display: flex; gap: 7px; padding: 6px 0 0 743.500px; }
.app { position: relative; display: flex; flex: none; justify-content: center; width: 48px; height: 48px; padding-top: 9px; border-radius: 4px; }
.app svg { width: 30px; height: 30px; }
.running::after, .active::after { content: ""; position: absolute; bottom: 0; left: 20px; width: 8px; height: 4px; border-radius: 2px; background: #7c8582; }
.active { background: #e5f8f3; }
.active::after { left: 14px; width: 20px; background: #0078d4; }
.tray { display: flex; margin-left: auto; padding-right: 24px; font-size: 15px; line-height: 20px; letter-spacing: -0.300px; }
.chevron { width: 18px; height: 10px; margin: 25px 17px 0 0; }
.lang { width: 34px; padding-top: 10px; text-align: center; display: flex; flex-direction: column; }
.tray-icons { width: 82px; height: 20px; margin: 20px 18px 0 20px; }
.clock { width: 64px; padding-top: 9px; text-align: right; display: flex; flex-direction: column; align-items: flex-end; white-space: nowrap; }
.time { letter-spacing: -0.400px; }
.date { letter-spacing: -0.050px; }
.notice { width: 20px; height: 20px; margin: 20px 0 0 8.500px; border-radius: 50%; background: #0078d4; color: #fff; text-align: center; font-size: 14px; }
```
